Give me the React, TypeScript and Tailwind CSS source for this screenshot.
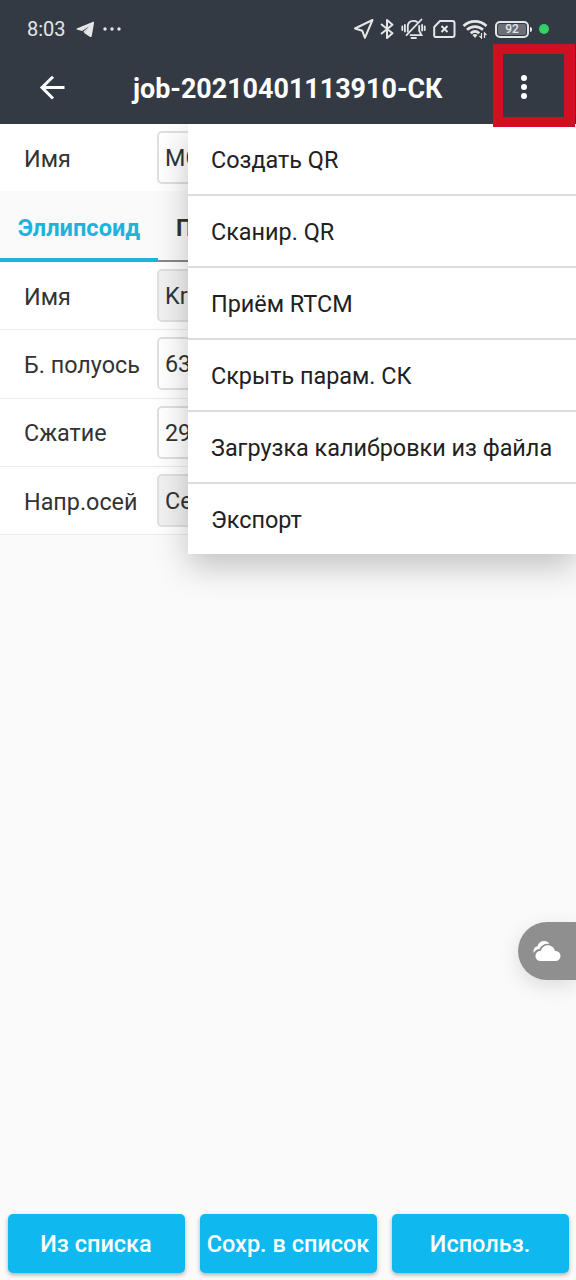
import clsx from "clsx"

const menuItems = [
  "Создать QR",
  "Сканир. QR",
  "Приём RTCM",
  "Скрыть парам. СК",
  "Загрузка калибровки из файла",
  "Экспорт",
]

const params = [
  { label: "Имя", value: "Kr", disabled: true },
  { label: "Б. полуось", value: "63", disabled: false },
  { label: "Сжатие", value: "29", disabled: false },
  { label: "Напр.осей", value: "Се", disabled: true },
]

const actions = ["Из списка", "Сохр. в список", "Использ."]

function StatusBar() {
  return (
    <div className="flex h-[58px] items-center text-[#e4e6e8]">
      <span className="ml-[27px] w-[49px] text-[20px] leading-none">8:03</span>
      <svg className="h-[17px] w-[19px]" viewBox="0 0 19 17" fill="currentColor">
        <path d="M.8 7.600 16.500.9c1.100-.4 1.700.1 1.500 1.300l-2.200 12.600c-.2 1.300-1.100 1.500-2 .9L8.500 12.300 12.800 5.500 6 9.900.8 8.600c-.6-.2-.6-.7 0-1Z" />
        <path d="m8.500 12.300 1-1.600 3.900-5.600-5.900 5.400Z" />
      </svg>
      <svg className="ml-[8px] h-[4px] w-[18px]" viewBox="0 0 18 4" fill="currentColor">
        <circle cx="2" cy="2" r="1.700" />
        <circle cx="9" cy="2" r="1.700" />
        <circle cx="16" cy="2" r="1.700" />
      </svg>

      <div className="ml-auto flex items-center">
        {/* Location */}
        <svg className="h-[22px] w-[22px]" viewBox="0 0 22 22" fill="none" stroke="currentColor" strokeWidth="2" strokeLinejoin="round">
          <path d="M19.500 2 2 10.500l7.300 2.300 2.600 7Z" />
        </svg>
        {/* Bluetooth */}
        <svg className="ml-[5px] h-[22px] w-[14px]" viewBox="0 0 14 22" fill="none" stroke="currentColor" strokeWidth="2" strokeLinejoin="round">
          <path d="m1 6 11.500 9.300L7 20V2l5.500 4.700L1 16" />
        </svg>
        {/* Muted bell */}
        <svg className="ml-[7px] h-[22px] w-[25px]" viewBox="0 0 25 22" fill="none" stroke="currentColor" strokeWidth="1.800" strokeLinecap="round">
          <path d="M6.800 13.500V8.500C6.800 4.800 9 2.800 12.500 2.800c1.500 0 2.700.4 3.700 1.100M18.200 7.800v5.200l2.300 4.100H9.500" />
          <path d="m20.500 1.500-15 15.700M10.500 20h4.500M1.300 8.500v3.500M3.900 7v6.500M23.700 8.500v3.500M21.100 7v5.500" />
        </svg>
        {/* SIM */}
        <svg className="ml-[7px] h-[20px] w-[23px]" viewBox="0 0 23 20" fill="none" stroke="currentColor" strokeWidth="2" strokeLinejoin="round">
          <path d="M7 2h12.500a2 2 0 0 1 2 2v12a2 2 0 0 1-2 2h-17a1.300 1.300 0 0 1-1.300-1.300V8Z" />
          <path d="m8.500 7 6 6m0-6-6 6" />
        </svg>
        {/* Wi-Fi */}
        <svg className="ml-[6px] h-[20px] w-[26px]" viewBox="0 0 26 20" fill="none" stroke="currentColor" strokeWidth="2.600">
          <path d="M1.500 7C8 .8 18 .8 24.500 7M5 10.800c4.500-4.300 11.500-4.300 16 0M8.700 14.200c2.700-2.400 5.900-2.400 8.600 0" />
          <path d="m10.500 16 2.500 3 2.500-3c-1.500-1.200-3.500-1.200-5 0Z" fill="currentColor" stroke="none" />
          <path d="M19.500 14v5l-2-2M22.500 19v-5l2 2" strokeWidth="1.200" />
        </svg>
        {/* Battery */}
        <div className="ml-[7px] flex h-[17px] w-[34px] rounded-[5px] border-2 border-[#e4e6e8] p-px">
          <div className="flex flex-1 items-center justify-center rounded-[2px] bg-[#6a6e76] text-[12px] leading-none font-medium">
            92
          </div>
        </div>
        <div className="ml-[1px] h-[5px] w-[2px] rounded-r bg-[#e4e6e8]" />
        <div className="mr-[27px] ml-[7px] h-[10px] w-[10px] rounded-full bg-[#35cf68]" />
      </div>
    </div>
  )
}

function Field({ value, disabled }: { value: string; disabled?: boolean }) {
  return (
    <div
      className={clsx(
        "flex h-[53px] flex-1 items-center overflow-hidden rounded-[5px] border-2 border-[#e0e0e0] pt-[2px] pl-[6px] whitespace-nowrap",
        disabled ? "bg-[#f1f1f1]" : "bg-white",
      )}
    >
      {value}
    </div>
  )
}

function Menu() {
  return (
    <div className="absolute top-[124px] right-0 w-[388px] bg-white shadow-[0_12px_32px_rgba(0,0,0,0.23)] [clip-path:inset(0_0_-80px_-60px)]">
      {menuItems.map((item) => (
        <div
          key={item}
          className="flex h-[72px] items-center border-b-2 border-[#dcdcdc] pt-[4px] pl-[23px] text-[23.400px] whitespace-nowrap text-[#212121] last:h-[70px] last:border-b-0"
        >
          {item}
        </div>
      ))}
    </div>
  )
}

export default function App() {
  return (
    <div className="relative flex h-[1280px] w-[576px] flex-col overflow-hidden bg-[#fafafa] font-['Roboto',sans-serif] text-[23.350px] text-[#333]">
      {/* Header */}
      <header className="h-[124px] bg-[#343a44]">
        <StatusBar />
        <div className="flex h-[60px] items-center text-white">
          <svg className="ml-[39px] h-[26px] w-[26px]" viewBox="0 0 26 26" fill="none" stroke="currentColor" strokeWidth="3">
            <path d="M25.500 12.500H3M14 1.700 3 12.500l11 11" />
          </svg>
          <h1 className="ml-[68px] pt-[2px] text-[26.900px] font-bold whitespace-nowrap">job-20210401113910-СК</h1>
          <svg className="mr-[49px] mb-[2px] ml-auto h-[26px] w-[6px]" viewBox="0 0 6 26" fill="currentColor">
            <circle cx="3" cy="4" r="3" />
            <circle cx="3" cy="13" r="3" />
            <circle cx="3" cy="22" r="3" />
          </svg>
        </div>
      </header>

      {/* Name */}
      <div className="flex h-[67px] items-center bg-white">
        <span className="w-[157px] pt-[4px] pl-[24px]">Имя</span>
        <Field value="МС" />
      </div>

      {/* Tabs */}
      <div className="flex h-[71px] font-bold">
        <div className="flex w-[158px] items-center justify-center border-b-4 border-[#1fb3dc] pt-[8px] text-[23.600px] text-[#1fb3dc]">
          Эллипсоид
        </div>
        <div className="flex flex-1 items-center border-b-2 border-[#888] pt-[6px] pl-[18px]">П</div>
      </div>

      {/* Ellipsoid parameters */}
      {params.map((p) => (
        <div key={p.label} className="flex h-[68.300px] items-center border-b border-[#ebebeb] bg-white">
          <span className="w-[157px] pt-[3px] pl-[24px] whitespace-nowrap">{p.label}</span>
          <Field value={p.value} disabled={p.disabled} />
        </div>
      ))}

      {/* Bottom actions */}
      <div className="mt-auto grid grid-cols-3 gap-[15px] px-[7.500px] pb-[7px]">
        {actions.map((a) => (
          <button
            key={a}
            className="h-[59px] rounded-[5px] bg-[#0fb9ef] pt-[3px] text-[23.500px] font-medium whitespace-nowrap text-white shadow-[0_2px_4px_rgba(0,0,0,0.3)]"
          >
            {a}
          </button>
        ))}
      </div>

      <Menu />

      {/* Highlight around the menu button */}
      <div className="absolute top-[44px] left-[493px] h-[83px] w-[82px] border-[10px] border-r-[11px] border-[#cf1020]" />

      {/* Cloud button */}
      <div className="absolute top-[922px] right-0 flex h-[58px] w-[58px] items-center rounded-l-full bg-[#8f8f8f] pl-[15px] shadow-[0_6px_20px_rgba(0,0,0,0.12)]">
        <svg className="h-[22px] w-[28px]" viewBox="0 0 28 22" fill="white">
          <path d="M7.500 21C4.500 21 2.500 18.800 2.500 16c0-2.900 2.300-5 5.300-5.200C8.900 7.300 11.500 5.300 14.800 5.300c3.500 0 6.300 2.300 7 5.500 3.300.2 5.700 2.300 5.700 5.200 0 2.900-2.300 5-5.300 5Z" />
          <path d="M.8 12.800C-.2 9.500 1.500 6.800 4.500 6.300 5.300 2.800 8 .8 11.200.9c2.300.1 4.200 1.200 5.300 2.900C12 3 8.300 5 6.500 9 4 9.200 2.200 10.500.8 12.800Z" />
        </svg>
      </div>
    </div>
  )
}
